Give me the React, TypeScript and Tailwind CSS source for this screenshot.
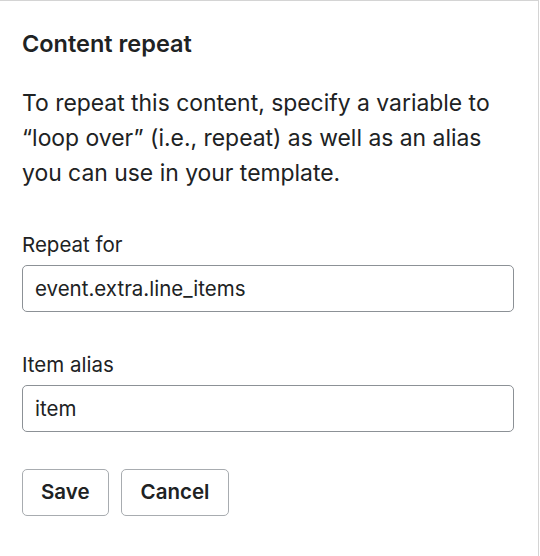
export default function App() {
  return (
    <div
      className="h-[556px] w-[539px] border-t border-r border-[#d4d4d4] bg-white px-[22px] text-[#202223]"
      style={{ fontFamily: 'Inter, "Noto Sans", sans-serif' }}
    >
      <h2 className="pt-[29px] text-[23.5px] leading-[28px] font-semibold">Content repeat</h2>
      <p className="mt-[28px] text-[22.9px] leading-[35px]">
        To repeat this content, specify a variable to “loop over” (i.e., repeat) as well as an alias you can use in
        your template.
      </p>

      <div className="mt-[42px] flex flex-col gap-[8px]">
        <label className="text-[20.5px] leading-[24px]">Repeat for</label>
        <input
          readOnly
          value="event.extra.line_items"
          className="h-[47px] w-[492px] rounded-[5px] border border-[#8c9196] px-[12px] text-[20.5px] text-[#202223] outline-none"
        />
      </div>

      <div className="mt-[41px] flex flex-col gap-[8px]">
        <label className="text-[20.5px] leading-[24px]">Item alias</label>
        <input
          readOnly
          value="item"
          className="h-[47px] w-[492px] rounded-[5px] border border-[#8c9196] px-[12px] text-[20.5px] text-[#202223] outline-none"
        />
      </div>

      <div className="mt-[37px] flex gap-[12px]">
        <button className="h-[47px] rounded-[5px] border border-[#a8acb0] px-[18px] text-[20.5px] font-semibold">
          Save
        </button>
        <button className="h-[47px] rounded-[5px] border border-[#a8acb0] px-[19px] text-[20.5px] font-semibold">
          Cancel
        </button>
      </div>
    </div>
  )
}
